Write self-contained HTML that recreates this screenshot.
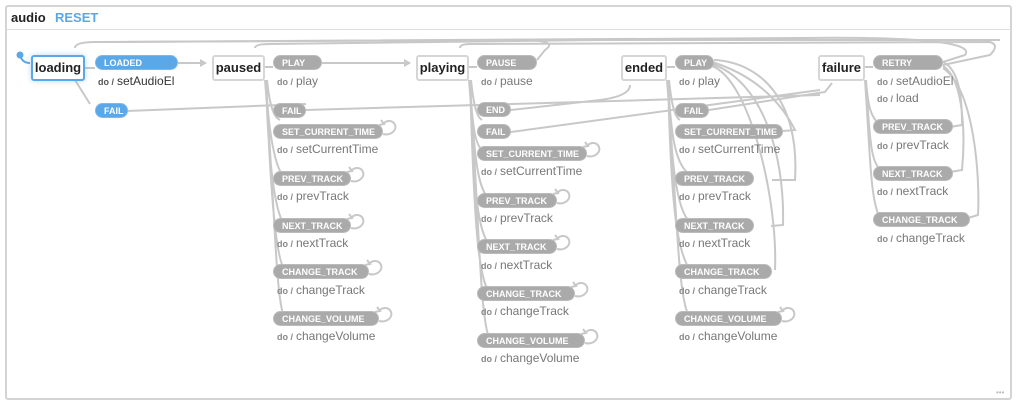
<!DOCTYPE html>
<html><head><meta charset="utf-8">
<style>
*{margin:0;padding:0;box-sizing:border-box}
body{width:1017px;height:408px;background:#fff;position:relative;overflow:hidden;font-family:"Liberation Sans",sans-serif}
.frame{position:absolute;left:5px;top:5px;width:1007px;height:395px;border:2px solid #d4d4d4;border-radius:3px}
.hdr{position:absolute;left:6px;top:29px;width:1005px;height:1px;background:#ddd}
.t{position:absolute;left:11px;top:10px;font-size:13px;font-weight:bold;color:#222}
.r{position:absolute;left:55px;top:10px;font-size:13px;font-weight:bold;color:#5aa8e8}
.s{position:absolute;top:55px;height:26px;border:2px solid #d6d6d6;border-radius:3px;background:#fff;font-size:13px;font-weight:bold;color:#222;text-align:center;line-height:22px}
.s.a{border-color:#5aa8e8;box-shadow:0 0 6px rgba(90,168,232,.4)}
.p{position:absolute;height:15px;border-radius:8px;background:#aaa;color:#fff;font-size:9px;font-weight:bold;line-height:15px;padding-left:8px;white-space:nowrap;border:1px solid #bbb}
.p.b{background:#5aa8e8;border-color:#7ab9ee}
.d{position:absolute;font-size:12px;color:#777;white-space:nowrap}
.d b{font-size:9px;color:#888;margin-right:3px}
.d.k{color:#333}.d.k b{color:#555}
svg{position:absolute;left:0;top:0}
.dots{position:absolute;left:996px;top:388px;font-size:8px;color:#bbb;letter-spacing:0px}
</style></head><body>
<div class="frame"></div><div class="hdr"></div>
<div class="t">audio</div><div class="r">RESET</div>
<svg width="1017" height="408" fill="none" stroke="#c8c8c8" stroke-width="2">
<circle cx="20" cy="55" r="3.5" fill="#5aa8e8" stroke="none"/>
<path d="M20 55 q2 8 10 8" stroke="#5aa8e8"/>
<path d="M85 68 H95 M178 63 H205 M265 67 H273 M322 63 H410 M469 67 H477 M667 67 H675 M865 67 H873"/>
<path d="M200 59 l7 4 -7 4z M404 59 l7 4 -7 4z" fill="#c8c8c8" stroke="none"/>
<path d="M75 48 Q75 42 95 42 L520 40 Q560 40 545 50 L537 60"/>
<path d="M255 48 Q255 44 270 44 L600 40 L1000 40"/>
<path d="M460 48 Q460 44 470 44 L990 42 Q1000 45 990 55 L943 65"/>
<path d="M100 42 L800 38 Q980 36 965 55 L943 62"/>
<path d="M127 111 L306 104 M306 110 L820 95 M511 110 L600 100 Q630 96 630 85 M511 132 L820 90 M709 110 L825 92 L832 83"/>
<path d="M75 80 L90 104"/>
<path d="M265 80 C275 200 275 300 285 320 M267 80 C270 110 275 118 280 120 M266 80 C270 180 275 260 285 270 M266 80 C268 160 275 215 285 225 M266 80 C268 130 275 170 285 178"/>
<path d="M469 80 C479 200 479 320 490 340 M471 80 C474 110 478 118 482 120 M470 80 C474 220 478 280 490 293 M470 80 C474 200 478 230 490 246 M470 80 C474 160 478 190 490 200 M470 80 C472 130 476 145 482 150"/>
<path d="M667 80 C677 200 677 300 690 318 M669 80 C672 110 676 118 680 120 M668 80 C671 200 676 250 690 270 M668 80 C671 160 676 210 690 222 M668 80 C671 140 676 165 690 175"/>
<path d="M865 80 C870 150 870 200 880 218 M866 80 C870 150 872 160 880 170 M866 80 C868 110 872 118 880 125"/>
<path d="M712 62 C770 80 790 120 795 130 L783 131 M712 64 C760 80 785 150 783 225 L771 226 M712 66 C750 80 778 200 775 270 M714 60 C760 62 800 100 795 180 L772 180"/>
<path d="M943 62 C960 70 962 100 962 125 L950 127 M943 66 C965 80 965 140 962 170 L950 172 M943 68 C975 90 980 180 978 215 L968 218"/>
<g id="loops">
<path d="M383 134 c8 2 14 -4 12 -9 c-2 -5 -8 -5 -11 -2"/><path d="M381 120 l3 4 -5 1" />
<path d="M351 181 c8 2 14 -4 12 -9 c-2 -5 -8 -5 -11 -2"/><path d="M349 167 l3 4 -5 1"/>
<path d="M351 228 c8 2 14 -4 12 -9 c-2 -5 -8 -5 -11 -2"/><path d="M349 214 l3 4 -5 1"/>
<path d="M369 274 c8 2 14 -4 12 -9 c-2 -5 -8 -5 -11 -2"/><path d="M367 260 l3 4 -5 1"/>
<path d="M379 321 c8 2 14 -4 12 -9 c-2 -5 -8 -5 -11 -2"/><path d="M377 307 l3 4 -5 1"/>
<path d="M587 156 c8 2 14 -4 12 -9 c-2 -5 -8 -5 -11 -2"/><path d="M585 142 l3 4 -5 1"/>
<path d="M557 203 c8 2 14 -4 12 -9 c-2 -5 -8 -5 -11 -2"/><path d="M555 189 l3 4 -5 1"/>
<path d="M557 249 c8 2 14 -4 12 -9 c-2 -5 -8 -5 -11 -2"/><path d="M555 235 l3 4 -5 1"/>
<path d="M575 296 c8 2 14 -4 12 -9 c-2 -5 -8 -5 -11 -2"/><path d="M573 282 l3 4 -5 1"/>
<path d="M585 343 c8 2 14 -4 12 -9 c-2 -5 -8 -5 -11 -2"/><path d="M583 329 l3 4 -5 1"/>
<path d="M782 321 c8 2 14 -4 12 -9 c-2 -5 -8 -5 -11 -2"/><path d="M780 307 l3 4 -5 1"/>
</g>
</svg>
<div class="s a" style="left:31px;width:54px">loading</div>
<div class="s" style="left:212px;width:53px">paused</div>
<div class="s" style="left:416px;width:53px">playing</div>
<div class="s" style="left:621px;width:46px">ended</div>
<div class="s" style="left:818px;width:47px">failure</div>

<div class="p b" style="left:95px;top:55px;width:83px">LOADED</div>
<div class="d k" style="left:98px;top:74px"><b>do /</b>setAudioEl</div>
<div class="p b" style="left:95px;top:103px;width:33px">FAIL</div>

<div class="p" style="left:273px;top:55px;width:49px">PLAY</div>
<div class="d" style="left:277px;top:74px"><b>do /</b>play</div>
<div class="p" style="left:273px;top:103px;width:33px">FAIL</div>
<div class="p" style="left:273px;top:124px;width:110px">SET_CURRENT_TIME</div>
<div class="d" style="left:277px;top:142px"><b>do /</b>setCurrentTime</div>
<div class="p" style="left:273px;top:171px;width:78px">PREV_TRACK</div>
<div class="d" style="left:277px;top:189px"><b>do /</b>prevTrack</div>
<div class="p" style="left:273px;top:218px;width:78px">NEXT_TRACK</div>
<div class="d" style="left:277px;top:236px"><b>do /</b>nextTrack</div>
<div class="p" style="left:273px;top:264px;width:96px">CHANGE_TRACK</div>
<div class="d" style="left:277px;top:283px"><b>do /</b>changeTrack</div>
<div class="p" style="left:273px;top:311px;width:106px">CHANGE_VOLUME</div>
<div class="d" style="left:277px;top:329px"><b>do /</b>changeVolume</div>

<div class="p" style="left:477px;top:55px;width:60px">PAUSE</div>
<div class="d" style="left:481px;top:74px"><b>do /</b>pause</div>
<div class="p" style="left:477px;top:102px;width:34px">END</div>
<div class="p" style="left:477px;top:124px;width:34px">FAIL</div>
<div class="p" style="left:477px;top:146px;width:110px">SET_CURRENT_TIME</div>
<div class="d" style="left:481px;top:164px"><b>do /</b>setCurrentTime</div>
<div class="p" style="left:477px;top:193px;width:80px">PREV_TRACK</div>
<div class="d" style="left:481px;top:211px"><b>do /</b>prevTrack</div>
<div class="p" style="left:477px;top:239px;width:80px">NEXT_TRACK</div>
<div class="d" style="left:481px;top:258px"><b>do /</b>nextTrack</div>
<div class="p" style="left:477px;top:286px;width:98px">CHANGE_TRACK</div>
<div class="d" style="left:481px;top:304px"><b>do /</b>changeTrack</div>
<div class="p" style="left:477px;top:333px;width:108px">CHANGE_VOLUME</div>
<div class="d" style="left:481px;top:351px"><b>do /</b>changeVolume</div>

<div class="p" style="left:675px;top:55px;width:39px">PLAY</div>
<div class="d" style="left:679px;top:74px"><b>do /</b>play</div>
<div class="p" style="left:675px;top:103px;width:34px">FAIL</div>
<div class="p" style="left:675px;top:124px;width:108px">SET_CURRENT_TIME</div>
<div class="d" style="left:679px;top:142px"><b>do /</b>setCurrentTime</div>
<div class="p" style="left:675px;top:171px;width:79px">PREV_TRACK</div>
<div class="d" style="left:679px;top:189px"><b>do /</b>prevTrack</div>
<div class="p" style="left:675px;top:218px;width:79px">NEXT_TRACK</div>
<div class="d" style="left:679px;top:236px"><b>do /</b>nextTrack</div>
<div class="p" style="left:675px;top:264px;width:97px">CHANGE_TRACK</div>
<div class="d" style="left:679px;top:283px"><b>do /</b>changeTrack</div>
<div class="p" style="left:675px;top:311px;width:107px">CHANGE_VOLUME</div>
<div class="d" style="left:679px;top:329px"><b>do /</b>changeVolume</div>

<div class="p" style="left:873px;top:55px;width:70px">RETRY</div>
<div class="d" style="left:877px;top:74px"><b>do /</b>setAudioEl</div>
<div class="d" style="left:877px;top:91px"><b>do /</b>load</div>
<div class="p" style="left:873px;top:119px;width:80px">PREV_TRACK</div>
<div class="d" style="left:877px;top:138px"><b>do /</b>prevTrack</div>
<div class="p" style="left:873px;top:166px;width:80px">NEXT_TRACK</div>
<div class="d" style="left:877px;top:184px"><b>do /</b>nextTrack</div>
<div class="p" style="left:873px;top:212px;width:97px">CHANGE_TRACK</div>
<div class="d" style="left:877px;top:231px"><b>do /</b>changeTrack</div>
<div class="dots">•••</div>
</body></html>
